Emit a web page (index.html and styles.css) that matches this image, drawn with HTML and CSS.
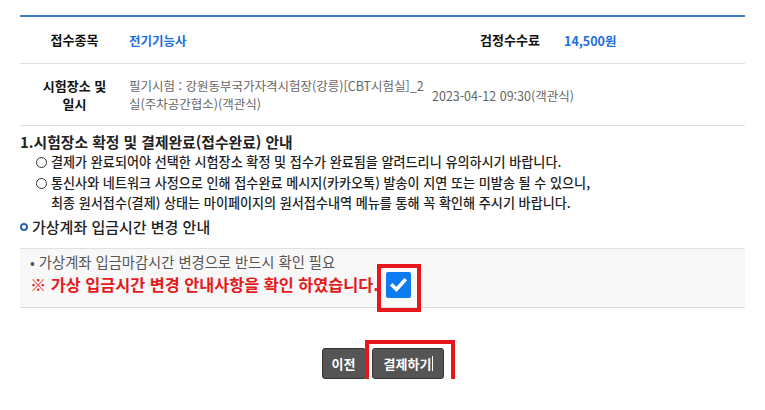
FILE: index.html
```html
<!DOCTYPE html>
<html lang="ko">
<head>
<meta charset="utf-8">
<title>접수 확인</title>
<link rel="stylesheet" href="styles.css">
</head>
<body>
<div class="page">
  <div class="info">
    <div class="row r1">
      <div class="lab">접수종목</div>
      <div class="val blue">전기기능사</div>
      <div class="lab2">검정수수료</div>
      <div class="val2 blue">14,500원</div>
    </div>
    <div class="row r2">
      <div class="lab">시험장소 및<br>일시</div>
      <div class="place">필기시험 : 강원동부국가자격시험장(강릉)[CBT시험실]_2<br>실(주차공간협소)(객관식)</div>
      <div class="date">2023-04-12 09:30(객관식)</div>
    </div>
  </div>

  <div class="notice">
    <h3 class="tit">1.시험장소 확정 및 결제완료(접수완료) 안내</h3>
    <ul class="circ">
      <li>결제가 완료되어야 선택한 시험장소 확정 및 접수가 완료됨을 알려드리니 유의하시기 바랍니다.</li>
      <li>통신사와 네트워크 사정으로 인해 접수완료 메시지(카카오톡) 발송이 지연 또는 미발송 될 수 있으니,<br>최종 원서접수(결제) 상태는 마이페이지의 원서접수내역 메뉴를 통해 꼭 확인해 주시기 바랍니다.</li>
    </ul>
  </div>

  <h3 class="sub"><span class="ring"></span>가상계좌 입금시간 변경 안내</h3>

  <div class="box">
    <p class="dot">• 가상계좌 입금마감시간 변경으로 반드시 확인 필요</p>
    <p class="warn">※ 가상 입금시간 변경 안내사항을 확인 하였습니다.<span class="chk marked"><svg width="25" height="26" viewBox="0 0 25 26"><rect x="0" y="0" width="25" height="26" rx="2" fill="#0d7cf2"/><path d="M6.5 13.5 L10.5 17.5 L18.5 8.5" fill="none" stroke="#fff" stroke-width="3.6" stroke-linecap="square" stroke-linejoin="miter"/></svg></span></p>
  </div>

  <div class="btns">
    <button class="btn">이전</button>
    <span class="marked mb"><button class="btn">결제하기<span class="caret"></span></button></span>
  </div>
</div>
</body>
</html>
```

FILE: styles.css
```css
*, *::before, *::after { box-sizing: border-box; }
html, body { margin: 0; padding: 0; background: #fff; }
body {
  font-family: "Noto Sans CJK KR", "Malgun Gothic", sans-serif;
  color: #222;
}
.page {
  width: 765px;
  padding: 15px 20px 0 20px;
}
.info {
  border-top: 2px solid #3b7bbe;
}
.row {
  display: grid;
  align-items: center;
  border-bottom: 1px solid #dedede;
}
.r1 {
  grid-template-columns: 109px 331px 100px 1fr;
  height: 47px;
}
.r2 {
  grid-template-columns: 109px 303px 1fr;
  height: 62px;
}
.lab, .lab2 {
  text-align: center;
  font-weight: 700;
  font-size: 13px;
  line-height: 18px;
  color: #111;
}
.val { font-size: 12.5px; font-weight: 700; }
.val2 { font-size: 12.5px; font-weight: 700; padding-left: 4px; }
.blue { color: #1d6ee0; }
.place {
  font-size: 12.5px;
  line-height: 18px;
  color: #666;
  white-space: nowrap;
}
.date {
  font-size: 12.5px;
  color: #666;
  padding-top: 2px;
}
.notice { padding-top: 6px; }
.tit {
  margin: 0;
  font-size: 14.8px;
  line-height: 20px;
  font-weight: 700;
  color: #222;
}
.circ {
  list-style: none;
  margin: 0;
  padding: 0 0 0 15px;
}
.circ li {
  font-size: 13.1px;
  line-height: 20.5px;
  color: #1e1e1e;
  font-weight: 500;
  padding-left: 16px;
  position: relative;
}
.circ li::before {
  content: "";
  position: absolute;
  left: 1px;
  top: 5px;
  width: 11px;
  height: 11px;
  border: 1px solid #333;
  border-radius: 50%;
}
.sub {
  margin: 2px 0 0 0;
  font-size: 15px;
  line-height: 22px;
  font-weight: 500;
  color: #222;
  display: flex;
  align-items: center;
}
.ring {
  width: 8px;
  height: 8px;
  border: 2px solid #2c64a8;
  border-radius: 50%;
  margin-right: 4px;
  margin-top: 1px;
}
.box {
  margin-top: 10px;
  background: #f8f8f8;
  border-top: 1px solid #e0e0e0;
  border-bottom: 1px solid #dcdcdc;
  padding: 4px 10px 9px 10px;
}
.box p { margin: 0; }
.dot {
  font-size: 14.3px;
  line-height: 18px;
  color: #555;
}
.warn {
  font-size: 16.3px;
  line-height: 26px;
  font-weight: 700;
  color: #e41a1c;
  display: flex;
  align-items: center;
}
.chk {
  display: inline-block;
  width: 25px;
  height: 26px;
  margin-left: 7px;
  margin-top: 1px;
}
.chk svg { display: block; }
.marked { position: relative; }
.chk.marked::after {
  content: "";
  position: absolute;
  left: -9px;
  top: -8px;
  width: 44px;
  height: 48px;
  border: 4px solid #e8151d;
}
.btns {
  margin-top: 40px;
  display: flex;
  justify-content: center;
  align-items: flex-start;
  gap: 6px;
}
.btn {
  font-family: "Noto Sans CJK KR", "Malgun Gothic", sans-serif;
  height: 31px;
  background: #555;
  border: 1px solid #333;
  border-radius: 3px;
  color: #fff;
  font-weight: 700;
  font-size: 13px;
  padding: 0;
  justify-content: center;
  display: inline-flex;
  align-items: center;
  white-space: nowrap;
  width: 44px;
}
.mb { display: block; }
.mb .btn { width: 72px; padding-left: 2px; }
.mb::after {
  content: "";
  position: absolute;
  left: -7px;
  top: -8px;
  width: 90px;
  height: 47px;
  border: 4px solid #e8151d;
}
.caret {
  display: inline-block;
  width: 1px;
  height: 15px;
  background: #fff;
  margin-left: 1px;
}
```
